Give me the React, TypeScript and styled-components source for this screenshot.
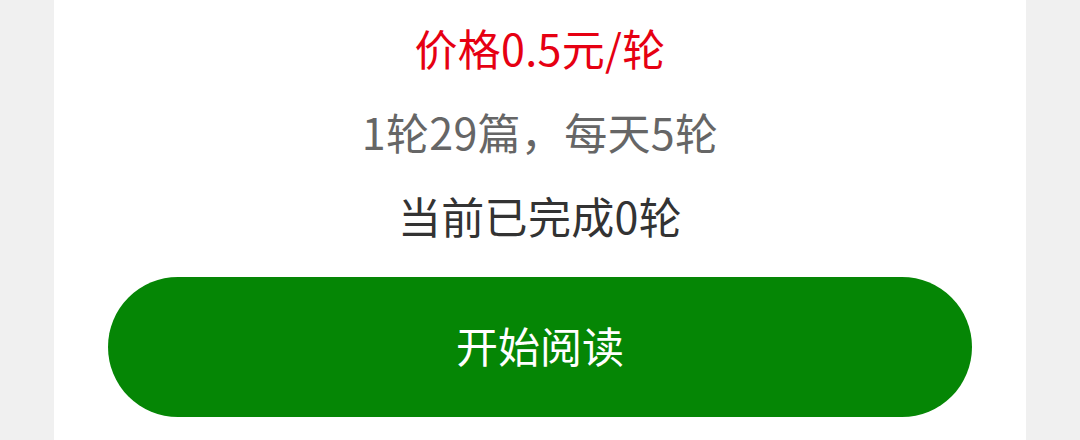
import styled, { createGlobalStyle } from "styled-components";

const GlobalStyle = createGlobalStyle`
  html, body {
    margin: 0;
    padding: 0;
    background: #f0f0f0;
    font-family: "Noto Sans CJK SC", "Noto Sans", sans-serif;
  }
`;

const Page = styled.div`
  display: flex;
  justify-content: center;
  height: 440px;
  overflow: hidden;
`;

const Card = styled.div`
  width: 972px;
  background: #ffffff;
  display: flex;
  flex-direction: column;
  align-items: center;
  padding: 5px 54px 0;
  box-sizing: border-box;
`;

const InfoLine = styled.p<{ $color: string }>`
  margin: 0;
  font-size: 43px;
  line-height: 84px;
  letter-spacing: 0.3px;
  color: ${(p) => p.$color};
`;

const StartButton = styled.button`
  margin-top: 20px;
  width: 100%;
  height: 140px;
  border: none;
  border-radius: 70px;
  background: #058605;
  color: #ffffff;
  font-family: inherit;
  font-size: 42px;
  line-height: 1;
  padding: 0 0 4px;
  cursor: pointer;
`;

export default function App() {
  return (
    <>
      <GlobalStyle />
      <Page>
        <Card>
          <InfoLine $color="#e60012">价格0.5元/轮</InfoLine>
          <InfoLine $color="#666666">1轮29篇，每天5轮</InfoLine>
          <InfoLine $color="#333333">当前已完成0轮</InfoLine>
          <StartButton>开始阅读</StartButton>
        </Card>
      </Page>
    </>
  );
}
